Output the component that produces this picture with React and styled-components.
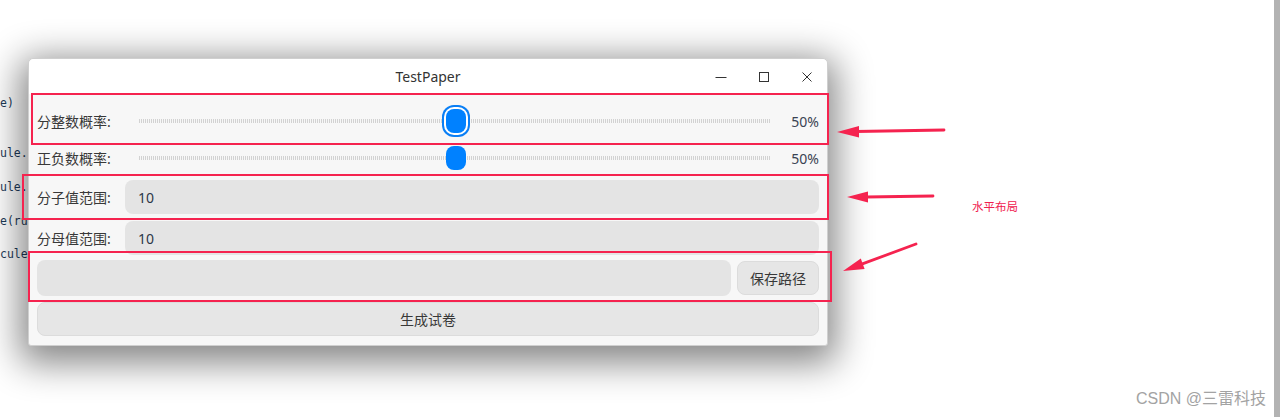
import React from 'react';
import styled, { createGlobalStyle } from 'styled-components';

const GlobalStyle = createGlobalStyle`
  html, body {
    margin: 0;
    padding: 0;
    background: #ffffff;
    overflow: hidden;
  }
`;

const UI_FONT = `"Noto Sans", "Noto Sans CJK SC", sans-serif`;
const RED = '#f5234f';

const Page = styled.div`
  display: flex;
  width: 1282px;
  height: 417px;
  background: #fff;
`;

const Desktop = styled.div`
  position: relative;
  flex: 1;
  overflow: hidden;
`;

const ScrollStrip = styled.div`
  width: 6px;
  margin-right: 2px;
  background: #b3b3b3;
`;

const CodeBehind = styled.pre`
  margin: 0;
  padding-top: 95px;
  font-family: "DejaVu Sans Mono", "Liberation Mono", monospace;
  font-size: 11.5px;
  line-height: 16.8px;
  color: #1c3a58;
`;

const Window = styled.div`
  position: absolute;
  left: 28px;
  top: 58px;
  width: 800px;
  height: 288px;
  box-sizing: border-box;
  display: flex;
  flex-direction: column;
  background: #f7f7f7;
  border: 1px solid #cfcfcf;
  border-radius: 5px 5px 3px 3px;
  box-shadow: 0 9px 36px 8px rgba(0, 0, 0, 0.48);
  font-family: ${UI_FONT};
  font-size: 14px;
  color: #383838;
`;

const TitleBar = styled.div`
  display: grid;
  grid-template-columns: 1fr auto 1fr;
  align-items: center;
  height: 35px;
  background: #ffffff;
  border-radius: 5px 5px 0 0;
`;

const Title = styled.div`
  grid-column: 2;
  color: #333;
  font-size: 14px;
`;

const Controls = styled.div`
  grid-column: 3;
  justify-self: end;
  display: flex;
  gap: 3px;
  height: 100%;
`;

const ControlButton = styled.div`
  width: 40px;
  display: flex;
  align-items: center;
  justify-content: center;
  color: #333;
`;

const Body = styled.div`
  flex: 1;
  display: flex;
  flex-direction: column;
  padding: 0 8px;
`;

const Row = styled.div`
  display: flex;
  align-items: center;
  gap: ${(p) => p.$gap || 0}px;
  height: ${(p) => p.$h}px;
  margin-top: ${(p) => p.$mt}px;
`;

const Label = styled.div`
  width: ${(p) => p.$w}px;
  flex-shrink: 0;
  white-space: nowrap;
`;

const Track = styled.div`
  position: relative;
  flex: 1;
  height: 100%;
  display: flex;
  align-items: center;
`;

const Groove = styled.div`
  width: 100%;
  height: 4px;
  background: repeating-linear-gradient(
    to right,
    #d2d2d2 0 1px,
    transparent 1px 2px
  );
`;

const Thumb = styled.div`
  position: absolute;
  left: 50%;
  top: 50%;
  width: 20px;
  height: 24px;
  transform: translate(-50%, -50%);
  margin-left: 1px;
  border-radius: 8px;
  background: #0081ff;
  box-shadow: ${(p) =>
    p.$focused ? '0 0 0 2px #ffffff, 0 0 0 4px #0a7ff5' : 'none'};
`;

const Value = styled.div`
  width: 48px;
  flex-shrink: 0;
  text-align: right;
  color: #3a4352;
`;

const Field = styled.div`
  flex: 1;
  height: 100%;
  box-sizing: border-box;
  display: flex;
  align-items: center;
  padding-left: 13px;
  background: #e4e4e4;
  border-radius: 8px;
  color: #2d3748;
`;

const Button = styled.div`
  height: ${(p) => p.$h || 34}px;
  width: ${(p) => (p.$w ? `${p.$w}px` : 'auto')};
  flex: ${(p) => (p.$w ? '0 0 auto' : 1)};
  box-sizing: border-box;
  display: flex;
  align-items: center;
  justify-content: center;
  background: #e6e6e6;
  border: 1px solid #dcdcdc;
  border-radius: 8px;
  color: #383838;
`;

const Annotations = styled.svg`
  position: absolute;
  left: 0;
  top: 0;
  pointer-events: none;
`;

const MarkBox = styled.div`
  position: absolute;
  left: ${(p) => p.$x}px;
  top: ${(p) => p.$y}px;
  width: ${(p) => p.$w}px;
  height: ${(p) => p.$h}px;
  box-sizing: border-box;
  border: 2px solid ${RED};
  pointer-events: none;
`;

const Note = styled.span`
  position: absolute;
  left: 972px;
  top: 198px;
  font-family: "Noto Sans CJK SC", sans-serif;
  font-size: 11.5px;
  line-height: 16px;
  color: #f0204e;
`;

const Watermark = styled.span`
  position: absolute;
  right: 8px;
  bottom: 8px;
  font-family: "Liberation Sans", "Noto Sans CJK SC", sans-serif;
  font-size: 16px;
  line-height: 20px;
  color: #a3a3a3;
`;

const SliderRow = ({ label, mt, focused }) => (
  <Row $h={34} $mt={mt}>
    <Label $w={102}>{label}</Label>
    <Track>
      <Groove />
      <Thumb $focused={focused} />
    </Track>
    <Value>50%</Value>
  </Row>
);

const FieldRow = ({ label, value, mt }) => (
  <Row $h={34} $mt={mt}>
    <Label $w={88}>{label}</Label>
    <Field>{value}</Field>
  </Row>
);

const code = ['e)', '', '', 'ule.F', '', 'ule.I', '', 'e(ru', '', 'cule('].join('\n');

export default function App() {
  return (
    <>
      <GlobalStyle />
      <Page>
        <Desktop>
          <CodeBehind>{code}</CodeBehind>

          <Window>
            <TitleBar>
              <Title>TestPaper</Title>
              <Controls>
                <ControlButton>
                  <svg width="12" height="12" viewBox="0 0 12 12">
                    <path d="M0.5 6.5h11" stroke="#333" strokeWidth="1" />
                  </svg>
                </ControlButton>
                <ControlButton>
                  <svg width="12" height="12" viewBox="0 0 12 12">
                    <rect x="1.5" y="1.5" width="9" height="9" fill="none" stroke="#333" strokeWidth="1" />
                  </svg>
                </ControlButton>
                <ControlButton>
                  <svg width="12" height="12" viewBox="0 0 12 12">
                    <path d="M1.5 1.5l9 9M10.5 1.5l-9 9" stroke="#333" strokeWidth="1" />
                  </svg>
                </ControlButton>
              </Controls>
            </TitleBar>
            <Body>
              <SliderRow label="分整数概率:" mt={10} focused />
              <SliderRow label="正负数概率:" mt={3} />
              <FieldRow label="分子值范围:" value="10" mt={5} />
              <FieldRow label="分母值范围:" value="10" mt={7} />
              <Row $h={36} $mt={5} $gap={6}>
                <Field />
                <Button $w={82}>保存路径</Button>
              </Row>
              <Row $h={34} $mt={6}>
                <Button>生成试卷</Button>
              </Row>
            </Body>
          </Window>

          <MarkBox $x={31} $y={93} $w={798} $h={52} />
          <MarkBox $x={22} $y={174} $w={807} $h={46} />
          <MarkBox $x={28} $y={251} $w={804} $h={51} />

          <Annotations width="1274" height="417">
            <g stroke={RED} strokeWidth="2.8" strokeLinecap="round">
              <line x1="944" y1="130" x2="856" y2="131.5" />
              <line x1="933" y1="196" x2="866" y2="197" />
              <line x1="916" y1="244" x2="861" y2="264.4" />
            </g>
            <g fill={RED}>
              <polygon points="837,132 859,126 859,137.5" />
              <polygon points="847,197 868,191.5 868,202.5" />
              <polygon points="843,271 864.6,268.9 860.8,258.5" />
            </g>
          </Annotations>
          <Note>水平布局</Note>
          <Watermark>CSDN @三雷科技</Watermark>
        </Desktop>
        <ScrollStrip />
      </Page>
    </>
  );
}
